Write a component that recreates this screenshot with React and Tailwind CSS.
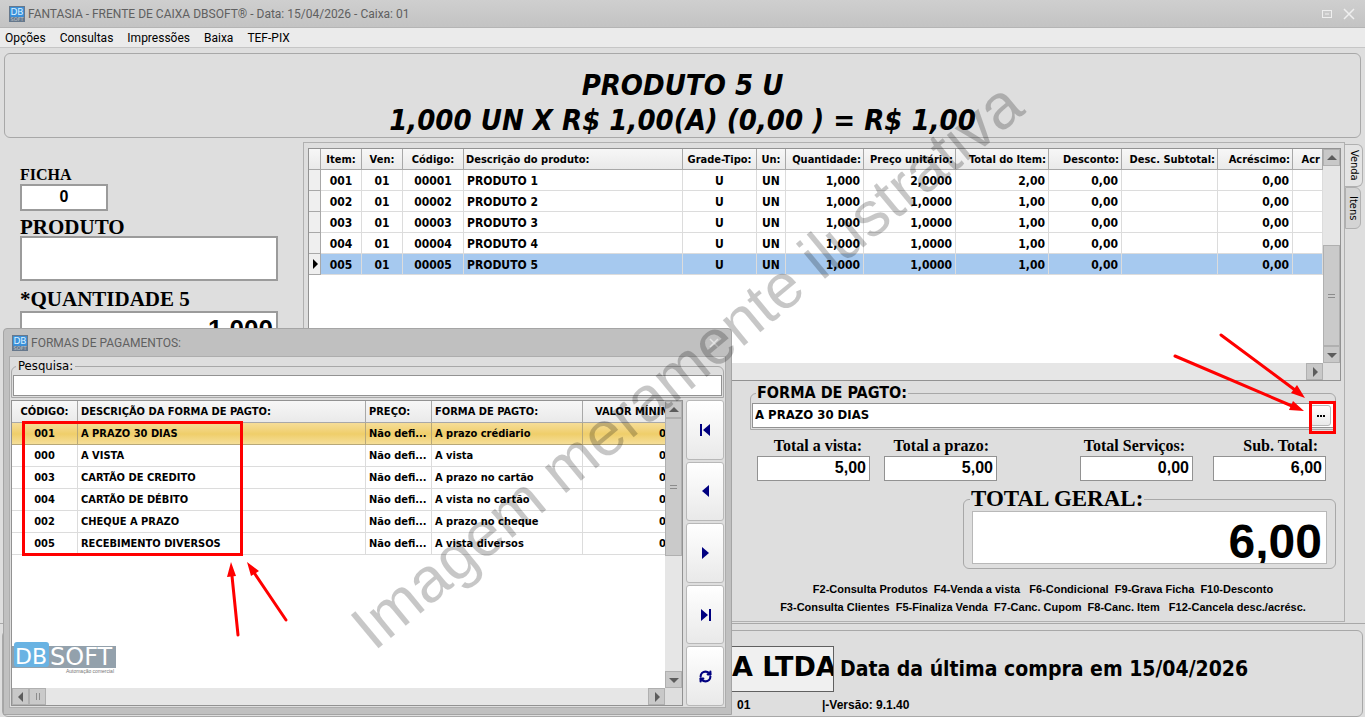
import React, { useState } from 'react';
import { RefreshCw } from 'lucide-react';
import clsx from 'clsx';

const menu = ['Opções', 'Consultas', 'Impressões', 'Baixa', 'TEF-PIX'];

const itemColumns = [
  { label: 'Item:', width: 'w-[41px]', align: 'text-center' },
  { label: 'Ven:', width: 'w-[41px]', align: 'text-center' },
  { label: 'Código:', width: 'w-[61px]', align: 'text-center' },
  { label: 'Descrição do produto:', width: 'w-auto', align: 'text-left' },
  { label: 'Grade-Tipo:', width: 'w-[74px]', align: 'text-center' },
  { label: 'Un:', width: 'w-[29px]', align: 'text-center' },
  { label: 'Quantidade:', width: 'w-[78px]', align: 'text-right' },
  { label: 'Preço unitário:', width: 'w-[92px]', align: 'text-right' },
  { label: 'Total do Item:', width: 'w-[93px]', align: 'text-right' },
  { label: 'Desconto:', width: 'w-[73px]', align: 'text-right' },
  { label: 'Desc. Subtotal:', width: 'w-[96px]', align: 'text-right' },
  { label: 'Acréscimo:', width: 'w-[75px]', align: 'text-right' },
  { label: 'Acr', width: 'w-[30px]', align: 'text-right' },
];

const items = [
  ['001', '01', '00001', 'PRODUTO 1', 'U', 'UN', '1,000', '2,0000', '2,00', '0,00', '', '0,00', ''],
  ['002', '01', '00002', 'PRODUTO 2', 'U', 'UN', '1,000', '1,0000', '1,00', '0,00', '', '0,00', ''],
  ['003', '01', '00003', 'PRODUTO 3', 'U', 'UN', '1,000', '1,0000', '1,00', '0,00', '', '0,00', ''],
  ['004', '01', '00004', 'PRODUTO 4', 'U', 'UN', '1,000', '1,0000', '1,00', '0,00', '', '0,00', ''],
  ['005', '01', '00005', 'PRODUTO 5', 'U', 'UN', '1,000', '1,0000', '1,00', '0,00', '', '0,00', ''],
];

const payments = [
  ['001', 'A PRAZO 30 DIAS', 'Não defi...', 'A prazo crédiario', '0'],
  ['000', 'A VISTA', 'Não defi...', 'A vista', '0'],
  ['003', 'CARTÃO DE CREDITO', 'Não defi...', 'A prazo no cartão', '0'],
  ['004', 'CARTÃO DE DÉBITO', 'Não defi...', 'A vista no cartão', '0'],
  ['002', 'CHEQUE A PRAZO', 'Não defi...', 'A prazo no cheque', '0'],
  ['005', 'RECEBIMENTO DIVERSOS', 'Não defi...', 'A vista diversos', '0'],
];

const AppIcon = () => (
  <svg width="16" height="16" viewBox="0 0 16 16" className="shrink-0">
    <rect width="16" height="16" fill="#66788c" />
    <rect x="1" y="1" width="14" height="10" rx="1" fill="#3b8fd8" />
    <text x="8" y="9" textAnchor="middle" fontFamily="DejaVu Sans" fontSize="9" fill="#d9f1ff">
      DB
    </text>
    <text x="8" y="15" textAnchor="middle" fontFamily="DejaVu Sans" fontSize="5" fill="#c3c9cf">
      SOFT
    </text>
  </svg>
);

const arrowPaths = {
  up: 'M8 5L13 10H3Z',
  down: 'M3 6H13L8 11Z',
  left: 'M5 8L10 3V13Z',
  right: 'M11 8L6 3V13Z',
};

const ScrollButton = ({ dir }) => (
  <button
    aria-label={dir}
    className="flex size-[17px] shrink-0 items-center justify-center border border-[#b0b0b0] bg-[#c8c8c8]"
  >
    <svg width="16" height="16" viewBox="0 0 16 16" className="shrink-0">
      <path d={arrowPaths[dir]} fill="#5c5c5c" />
    </svg>
  </button>
);

const Money = ({ label, value, className }) => (
  <label className={clsx('flex w-[113px] flex-col', className)}>
    <span className="pr-2 text-right font-['Liberation_Serif',serif] text-[16px] leading-[20px] font-bold whitespace-nowrap">
      {label}
    </span>
    <input
      defaultValue={value}
      className="h-[25px] w-full border border-[#929292] bg-white px-[3px] pb-[2px] text-right font-['Liberation_Sans',sans-serif] text-[16px] font-bold"
    />
  </label>
);

const navIcons = [
  { name: 'Primeiro', path: 'M3 2H5V14H3ZM13 2V14L6 8Z' },
  { name: 'Anterior', path: 'M12 2V14L5 8Z' },
  { name: 'Próximo', path: 'M5 2V14L12 8Z' },
  { name: 'Último', path: 'M4 2V14L11 8ZM12 2H14V14H12Z' },
  { name: 'Atualizar' },
];

const PaymentDialog = () => {
  const [selected, setSelected] = useState(0);

  return (
    <div
      role="dialog"
      aria-label="Formas de pagamentos"
      className="absolute top-[328px] left-[3px] z-10 flex w-[729px] flex-col rounded-t-sm border border-[#a5a5a5] bg-[#c0c0c0] px-[5px] pb-[6px]"
    >
      <div className="flex h-[27px] items-center gap-[3px] px-[3px]">
        <AppIcon />
        <h2 className="grow font-['Roboto',sans-serif] text-[12px] leading-[16px] text-[#606060]">
          FORMAS DE PAGAMENTOS:
        </h2>
        <button aria-label="Fechar" className="p-1 text-[#e4e4e4]">
          <svg width="10" height="10" viewBox="0 0 10 10" fill="none" stroke="currentColor" strokeWidth="1.5">
            <path d="M1 1L9 9M9 1L1 9" />
          </svg>
        </button>
      </div>

      <div className="border border-[#adadad] bg-[#dedede] px-[1px] pb-[1px]">
        <fieldset className="rounded-t-md border border-[#a8a8a8] px-[1px] pb-[1px]">
          <legend className="ml-[3px] px-[2px] text-[13px] leading-[18px]">
            <label htmlFor="pesquisa">Pesquisa:</label>
          </legend>
          <input id="pesquisa" className="block h-[21px] w-full border border-[#929292] bg-white px-1 text-[12px]" />
        </fieldset>

        <div className="mt-[2px] flex gap-[3px]">
          <div className="flex grow flex-col border border-[#929292] bg-white">
            <div className="flex grow">
              <div className="flex w-0 grow flex-col overflow-hidden">
                <table className="w-[671px] table-fixed border-separate border-spacing-0 text-[11px] font-bold *:*:*:pt-[2px]">
                  <thead>
                    <tr className="h-[22px] bg-linear-to-b from-[#f7f7f7] to-[#e9e9e9] text-left">
                      <th className="w-[66px] border-r border-b border-[#a8a8a8] text-center">CÓDIGO:</th>
                      <th className="w-[288px] border-r border-b border-[#a8a8a8] pl-[3px]">
                        DESCRIÇÃO DA FORMA DE PAGTO:
                      </th>
                      <th className="w-[66px] border-r border-b border-[#a8a8a8] pl-[3px]">PREÇO:</th>
                      <th className="w-[151px] border-r border-b border-[#a8a8a8] pl-[3px]">FORMA DE PAGTO:</th>
                      <th className="border-b border-[#a8a8a8] pl-[12px] whitespace-nowrap">VALOR MÍNIMO:</th>
                    </tr>
                  </thead>
                  <tbody>
                    {payments.map((row, i) => (
                      <tr
                        key={row[0]}
                        onClick={() => setSelected(i)}
                        className={clsx(
                          'h-[22px]',
                          i === selected
                            ? 'bg-linear-to-b from-[#f6dd97] via-[#efce6a] to-[#f6e09c] *:border-[#b8a878]'
                            : 'bg-white *:border-[#dcdcdc]'
                        )}
                      >
                        <td className="border-r border-b text-center">{row[0]}</td>
                        <td className="border-r border-b pl-[3px]">{row[1]}</td>
                        <td className="border-r border-b pl-[3px]">{row[2]}</td>
                        <td className="border-r border-b pl-[3px]">{row[3]}</td>
                        <td className="border-b pl-[76px]">{row[4]}</td>
                      </tr>
                    ))}
                  </tbody>
                </table>
                <svg width="104" height="34" viewBox="0 0 104 34" className="mt-auto mb-[13px]">
                  <rect x="0" y="5" width="104" height="22" fill="#93a1ac" />
                  <rect x="2" y="1" width="35" height="25" rx="3" fill="#69b3e3" />
                  <g fontFamily="DejaVu Sans, sans-serif" fill="#ffffff">
                    <text x="3" y="23" fontSize="22">
                      DB
                    </text>
                    <text x="38" y="24" fontSize="24">
                      SOFT
                    </text>
                  </g>
                  <text x="102" y="32" textAnchor="end" fontFamily="Liberation Sans" fontSize="5" fill="#777777">
                    Automação comercial
                  </text>
                </svg>
              </div>
              <div className="flex w-[17px] flex-col bg-[#e6e6e6]">
                <ScrollButton dir="up" />
                <div className="flex h-[138px] items-center justify-center border border-[#b0b0b0] bg-[#cacaca]">
                  <div className="h-[4px] w-[7px] border-y border-[#8c8c8c]" />
                </div>
                <div className="h-[115px]" />
                <ScrollButton dir="down" />
              </div>
            </div>
            <div className="flex bg-[#e6e6e6]">
              <ScrollButton dir="left" />
              <div className="flex w-[17px] items-center justify-center border border-[#b0b0b0] bg-[#cacaca]">
                <div className="h-[7px] w-[4px] border-x border-[#8c8c8c]" />
              </div>
              <div className="grow" />
              <ScrollButton dir="right" />
              <div className="w-[17px] bg-[#dedede]" />
            </div>
          </div>

          <div className="flex w-[38px] flex-col gap-[2px]">
            {navIcons.map((icon) => (
              <button
                key={icon.name}
                aria-label={icon.name}
                className="flex grow basis-0 items-center justify-center rounded-[3px] border border-[#b8b8b8] bg-linear-to-b from-white to-[#e9e9e9] text-[#000080]"
              >
                {icon.path ? (
                  <svg width="16" height="16" viewBox="0 0 16 16" fill="currentColor">
                    <path d={icon.path} />
                  </svg>
                ) : (
                  <RefreshCw size={13} strokeWidth={4} />
                )}
              </button>
            ))}
          </div>
        </div>
      </div>
    </div>
  );
};

const App = () => {
  return (
    <div className="relative flex min-h-screen flex-col overflow-hidden bg-[#dedede] font-['DejaVu_Sans_Condensed','DejaVu_Sans',sans-serif] text-black">
      <header className="flex h-[28px] items-center gap-[3px] border-b border-[#b4b4b4] bg-linear-to-b from-[#cfcfcf] to-[#c3c3c3] pr-[10px] pl-[9px]">
        <AppIcon />
        <h1 className="grow font-['Roboto',sans-serif] text-[12px] leading-[16px] text-[#606060]">
          FANTASIA - FRENTE DE CAIXA DBSOFT® - Data: 15/04/2026 - Caixa: 01
        </h1>
        <button aria-label="Restaurar" className="mr-[7px] text-[#efefef]">
          <svg width="12" height="12" viewBox="0 0 12 12" fill="none" stroke="currentColor">
            <rect x="1.5" y="2.5" width="9" height="7" />
            <path d="M4 6H8" />
          </svg>
        </button>
        <button aria-label="Fechar" className="text-[#efefef]">
          <svg width="12" height="12" viewBox="0 0 12 12" fill="none" stroke="currentColor" strokeWidth="1.5">
            <path d="M1 1L11 11M11 1L1 11" />
          </svg>
        </button>
      </header>

      <nav className="flex h-[20px] items-center gap-[14px] border-b border-[#c6c6c6] bg-[#ebebeb] px-[5px] font-['Roboto',sans-serif] text-[12px] leading-[16px]">
        {menu.map((item) => (
          <button key={item}>{item}</button>
        ))}
      </nav>

      <section className="mx-1 mt-[5px] flex h-[85px] flex-col items-center rounded-md border border-[#a8a8a8] pt-[14px] text-[29px] leading-[35px] font-bold whitespace-pre italic">
        <p>PRODUTO 5 U</p>
        <p>1,000 UN X R$ 1,00(A) (0,00 ) = R$ 1,00</p>
      </section>

      <main className="mt-1 flex">
        <aside className="w-[303px] shrink-0 px-5 pt-[24px] font-['Liberation_Serif',serif] font-bold">
          <label htmlFor="ficha" className="block text-[16px] leading-[18px]">
            FICHA
          </label>
          <input
            id="ficha"
            defaultValue="0"
            className="block h-[27px] w-[88px] border-2 border-[#9b9b9b] bg-white pb-[2px] text-center font-['Liberation_Sans',sans-serif] text-[16px]"
          />
          <label htmlFor="produto" className="mt-[7px] block text-[21px] leading-[18px]">
            PRODUTO
          </label>
          <input
            id="produto"
            className="block h-[45px] w-[258px] border-2 border-[#9b9b9b] bg-white px-1 text-[21px]"
          />
          <label htmlFor="quantidade" className="mt-[6px] block text-[21px] leading-[24px]">
            *QUANTIDADE 5
          </label>
          <input
            id="quantidade"
            defaultValue="1,000"
            className="block h-[36px] w-[258px] border-2 border-[#9b9b9b] bg-white px-[3px] text-right font-['Liberation_Sans',sans-serif] text-[26px]"
          />
        </aside>

        <section className="flex w-0 grow flex-col border border-[#b0b0b0] pt-[5px] pr-[3px] pb-[5px] pl-[4px]">
          <div className="flex flex-col border border-[#929292] bg-white">
            <div className="flex h-[214px]">
              <div className="w-0 grow overflow-hidden">
                <table className="w-full table-fixed border-separate border-spacing-0 text-[12px] font-bold">
                  <thead>
                    <tr className="h-[21px] bg-linear-to-b from-[#f7f7f7] to-[#e9e9e9] text-[11px] whitespace-nowrap">
                      <th className="w-[12px] border-r border-b border-[#a8a8a8]" />
                      {itemColumns.map((col) => (
                        <th
                          key={col.label}
                          className={clsx(
                            'overflow-hidden border-r border-b border-[#a8a8a8] px-[2px] pt-[2px]',
                            col.width,
                            col.align
                          )}
                        >
                          {col.label}
                        </th>
                      ))}
                    </tr>
                  </thead>
                  <tbody>
                    {items.map((row, i) => (
                      <tr
                        key={row[0]}
                        className={clsx('h-[21px]', i === items.length - 1 ? 'bg-[#a6c9ef]' : 'bg-white')}
                      >
                        <td className="border-r border-b border-[#a8a8a8] bg-[#efefef] p-0">
                          {i === items.length - 1 && (
                            <svg width="10" height="12" viewBox="0 0 10 12">
                              <path d="M4 1L9 6L4 11Z" />
                            </svg>
                          )}
                        </td>
                        {row.map((value, j) => (
                          <td
                            key={itemColumns[j].label}
                            className={clsx(
                              'border-r border-b border-[#dcdcdc] px-[3px] pt-[2px] pb-0 leading-[18px]',
                              itemColumns[j].align
                            )}
                          >
                            {value}
                          </td>
                        ))}
                      </tr>
                    ))}
                  </tbody>
                </table>
              </div>
              <div className="flex w-[17px] flex-col bg-[#e6e6e6]">
                <ScrollButton dir="up" />
                <div className="grow" />
                <div className="flex h-[101px] items-center justify-center border border-[#b0b0b0] bg-[#cacaca]">
                  <div className="h-[4px] w-[7px] border-y border-[#8c8c8c]" />
                </div>
                <ScrollButton dir="down" />
              </div>
            </div>
            <div className="flex justify-end bg-[#e6e6e6]">
              <ScrollButton dir="right" />
              <div className="w-[17px] bg-[#dedede]" />
            </div>
          </div>

          <div className="mt-[2px] mr-[5px] flex w-[586px] flex-col self-end">
            <fieldset className="rounded-t-md border border-[#a8a8a8] px-[1px] pb-[1px]">
              <legend className="ml-[4px] px-[1px] text-[16px] leading-[20px] font-bold">
                <label htmlFor="forma">FORMA DE PAGTO:</label>
              </legend>
              <div className="flex h-[25px] items-center border border-[#929292] bg-white">
                <input
                  id="forma"
                  defaultValue="A PRAZO 30 DIAS"
                  className="h-full grow px-[2px] pb-[2px] text-[13px] font-bold"
                />
                <button
                  aria-label="Abrir formas de pagamento"
                  className="mr-[2px] flex h-[21px] w-[21px] items-center justify-center gap-[1px] rounded-[3px] border border-[#b8b8b8] bg-linear-to-b from-white to-[#e9e9e9]"
                >
                  <span className="size-[2px] bg-black" />
                  <span className="size-[2px] bg-black" />
                  <span className="size-[2px] bg-black" />
                </button>
              </div>
            </fieldset>

            <div className="mt-[6px] flex pr-[10px] pl-[7px]">
              <Money label="Total a vista:" value="5,00" />
              <Money label="Total a prazo:" value="5,00" className="ml-[14px]" />
              <Money label="Total Serviços:" value="0,00" className="ml-auto" />
              <Money label="Sub. Total:" value="6,00" className="ml-5" />
            </div>

            <fieldset className="mt-[6px] w-[373px] self-end rounded-md border border-[#a8a8a8] px-[8px] pb-[4px]">
              <legend className="-ml-[2px] px-[1px] font-['Liberation_Serif',serif] text-[23px] leading-[24px] font-bold">
                <label htmlFor="total">TOTAL GERAL:</label>
              </legend>
              <input
                id="total"
                defaultValue="6,00"
                className="block h-[53px] w-full border border-[#b8b8b8] bg-white px-1 pt-[8px] text-right font-['Liberation_Sans',sans-serif] text-[48px] leading-[46px] font-bold"
              />
            </fieldset>

            <div className="mt-[11px] text-center font-['Liberation_Sans',sans-serif] text-[11px] leading-[18px] font-bold whitespace-pre">
              <p>F2-Consulta Produtos  F4-Venda a vista   F6-Condicional  F9-Grava Ficha  F10-Desconto</p>
              <p>F3-Consulta Clientes  F5-Finaliza Venda  F7-Canc. Cupom  F8-Canc. Item   F12-Cancela desc./acrésc.</p>
            </div>
          </div>
        </section>

        <div role="tablist" className="mt-[2px] mr-[2px] flex w-[18px] shrink-0 flex-col items-start text-[11px] leading-[14px]">
          <button
            role="tab"
            className="h-[43px] w-[18px] rounded-r-md border border-l-0 border-[#b0b0b0] bg-[#e4e4e4] [writing-mode:vertical-rl]"
          >
            Venda
          </button>
          <button
            role="tab"
            className="h-[42px] w-[16px] rounded-r-md border border-[#b0b0b0] bg-[#d4d4d4] [writing-mode:vertical-rl]"
          >
            Itens
          </button>
        </div>
      </main>

      <footer className="mt-[1px] border-t border-[#a8a8a8] px-[2px] pt-[6px]">
        <div className="h-[87px] rounded-md border border-[#a8a8a8] pt-[15px] pl-[723px]">
          <div className="flex items-center gap-[6px] font-bold whitespace-nowrap">
            <input
              aria-label="Empresa"
              defaultValue="A LTDA"
              className="h-[46px] w-[108px] shrink-0 border border-[#606060] bg-[#f0f0f0] pb-[6px] pl-[5px] font-['DejaVu_Sans',sans-serif] text-[27px]"
            />
            <p className="text-[21px] leading-[28px]">Data da última compra em 15/04/2026</p>
          </div>
          <div className="mt-[5px] flex pl-[11px] font-['Liberation_Sans',sans-serif] text-[12px] leading-[16px] font-bold">
            <span className="w-[85px]">01</span>
            <span>|-Versão: 9.1.40</span>
          </div>
        </div>
      </footer>

      <PaymentDialog />

      <svg width="1060" height="660" className="pointer-events-none absolute top-0 left-0 z-20">
        <text
          x="374"
          y="652"
          transform="rotate(-39.6 374 652)"
          fontFamily="Liberation Sans, Arial, sans-serif"
          fontSize="63"
          fill="#000000"
          fillOpacity="0.22"
        >
          Imagem meramente ilustrativa
        </text>
        <rect x="23.5" y="422.5" width="218" height="132" fill="none" stroke="#ff0000" strokeWidth="3" />
        <g stroke="#ff0000" strokeWidth="3" strokeLinecap="round" fill="#ff0000">
          <path d="M238 635L232 576M286 620L255 574" />
          <path stroke="none" d="M231 562L236 576L227 577ZM247 562L259 571L251 576Z" />
        </g>
      </svg>

      <svg width="200" height="120" viewBox="1165 325 200 120" className="pointer-events-none absolute top-[325px] right-0 z-20">
        <rect x="1310.5" y="402.5" width="24" height="30" fill="none" stroke="#ff0000" strokeWidth="3" />
        <g stroke="#ff0000" strokeWidth="3" strokeLinecap="round" fill="#ff0000">
          <path d="M1175 356L1292 406M1221 335L1295 390" />
          <path stroke="none" d="M1304 411L1289 410L1293 401ZM1305 398L1291 393L1297 385Z" />
        </g>
      </svg>
    </div>
  );
};

export default App;
